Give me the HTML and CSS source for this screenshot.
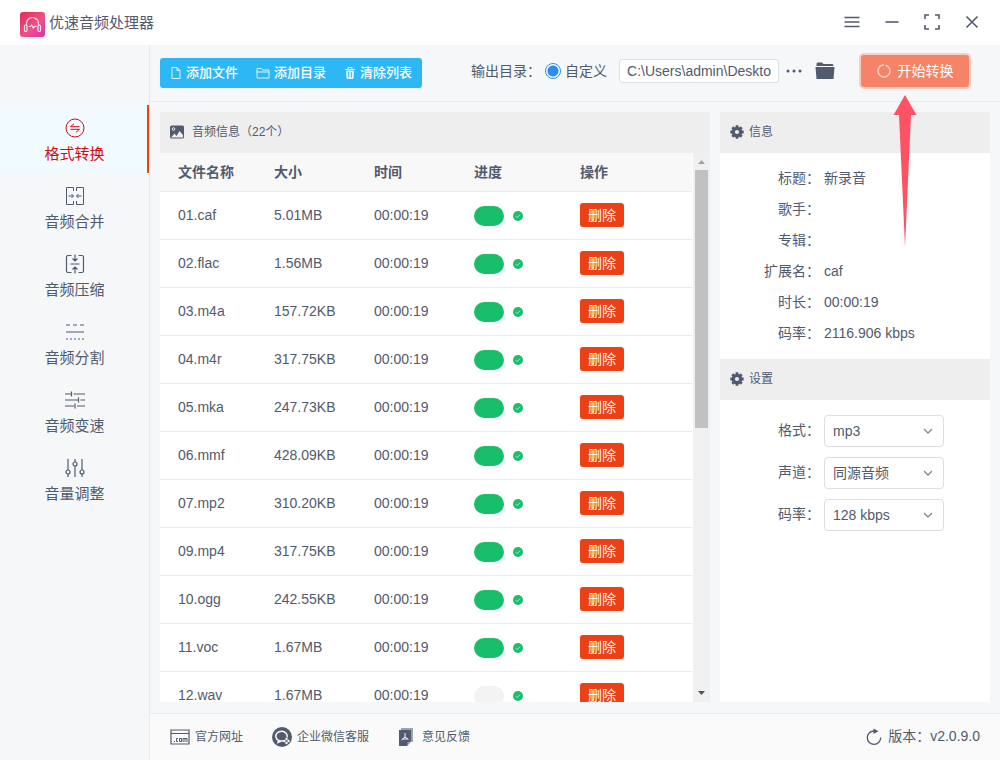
FILE: index.html
```html
<!DOCTYPE html>
<html lang="zh-CN">
<head>
<meta charset="utf-8">
<title>优速音频处理器</title>
<link rel="stylesheet" href="styles.css">
</head>
<body>
<svg class="symbols" aria-hidden="true">
  <symbol id="gear" viewBox="0 0 14 14"><g fill="none" stroke="currentColor"><circle cx="7" cy="7" r="3.700" stroke-width="3.200"/><path stroke-width="2.800" d="M7 .3V2.500M7 11.500V13.700M.3 7H2.500M11.500 7H13.700M2.300 2.300 4 4M10 10 11.700 11.700M11.700 2.300 10 4M4 10 2.300 11.700"/></g></symbol>
  <symbol id="ok" viewBox="0 0 10 10"><circle cx="5" cy="5" r="5" fill="#19be6b"/><path d="M2.600 5.600 4.200 6.400 7.400 3.600" fill="none" stroke="#a3e5c4"/></symbol>
  <symbol id="chevron" viewBox="0 0 10 6"><path d="M1 1 5 5 9 1" fill="none" stroke="#808695" stroke-width="1.300"/></symbol>
</svg>
<div class="app">
  <header class="titlebar">
    <svg class="logo" viewBox="0 0 25 25">
      <defs><linearGradient id="lg" x1="0" y1="0" x2="1" y2="1"><stop offset="0" stop-color="#e62b54"/><stop offset=".55" stop-color="#ee5084"/><stop offset="1" stop-color="#e32fb0"/></linearGradient></defs>
      <rect width="25" height="25" rx="3" fill="url(#lg)"/>
      <g fill="none" stroke="#ffe3ea" stroke-width="1.200" stroke-linecap="round" stroke-linejoin="round"><path d="M6.500 13V11.500a6 6 0 0 1 12 0V13"/><rect x="4.500" y="13" width="2.500" height="6.500" rx="1.200"/><rect x="18" y="13" width="2.500" height="6.500" rx="1.200"/><path d="M9 14.500h1.500l1.200-1.500 1.500 3 1.300-1.500H16"/></g>
    </svg>
    <h1 class="app-name">优速音频处理器</h1>
    <div class="window-controls">
      <button class="win-btn" aria-label="菜单"><svg viewBox="0 0 16 16"><path d="M.5 3.500H15.500M.5 8H15.500M.5 12.500H15.500"/></svg></button>
      <button class="win-btn" aria-label="最小化"><svg viewBox="0 0 16 16"><path d="M1.500 8H14.500"/></svg></button>
      <button class="win-btn" aria-label="最大化"><svg viewBox="0 0 16 16"><path d="M1 5V1H5M11 1H15V5M15 11V15H11M5 15H1V11"/></svg></button>
      <button class="win-btn" aria-label="关闭"><svg viewBox="0 0 16 16"><path d="M2.500 2.500 13.500 13.500M13.500 2.500 2.500 13.500"/></svg></button>
    </div>
  </header>
  <div class="body">
    <nav class="sidebar">
      <button class="nav-item active"><svg viewBox="0 0 20 20"><circle cx="10" cy="10" r="9"/><path d="M14.500 8.700H5.500L9 5.800M5.500 11.300H14.500L11 14.200"/></svg><span>格式转换</span></button>
      <button class="nav-item"><svg viewBox="0 0 20 20"><path d="M8.500 5V1.500H1.500V18.500H8.500V15M11.500 5V1.500H18.500V18.500H11.500V15M3.500 10H8.500M6.500 8 8.500 10 6.500 12M16.500 10H11.500M13.500 8 11.500 10 13.500 12"/></svg><span>音频合并</span></button>
      <button class="nav-item"><svg class="strong" viewBox="0 0 20 20"><path d="M6.500 1.500H3Q1.500 1.500 1.500 3V17Q1.500 18.500 3 18.500H6.500M13.500 1.500H17Q18.500 1.500 18.500 3V17Q18.500 18.500 17 18.500H13.500M5.500 10H14.500M10 .5V7M7.500 4.500 10 7 12.500 4.500M10 19.500V13M7.500 15.500 10 13 12.500 15.500"/></svg><span>音频压缩</span></button>
      <button class="nav-item"><svg class="strong" viewBox="0 0 20 20"><path d="M1 3H5M8 3H12M15 3H19M1 10H19"/><path stroke-dasharray="2 2" d="M1 17H19"/></svg><span>音频分割</span></button>
      <button class="nav-item"><svg class="strong" viewBox="0 0 20 20"><path d="M0 4H6.500M8.500 4H20M6.500 1.500V6.500M0 10H13.500M15.500 10H20M13.500 7.500V12.500M0 16H9M12 16H20M10 13.500V18.500"/></svg><span>音频变速</span></button>
      <button class="nav-item"><svg class="strong" viewBox="0 0 20 20"><path d="M3 1V12M3 16V19M10 1V4M10 8V19M17 1V12M17 16V19"/><circle cx="3" cy="14" r="2"/><circle cx="10" cy="6" r="2"/><circle cx="17" cy="14" r="2"/></svg><span>音量调整</span></button>
    </nav>
    <div class="workspace">
      <div class="toolbar">
        <div class="file-actions">
          <button class="file-btn"><svg viewBox="0 0 12 14"><path d="M2 1.500H7L10 4.500V12.500H2ZM7 1.500V4.500H10"/></svg>添加文件</button>
          <button class="file-btn"><svg class="wide" viewBox="0 0 14 14"><path d="M1 2.500H5.500L6.500 4H13V12H1ZM1 6H13"/></svg>添加目录</button>
          <button class="file-btn"><svg viewBox="0 0 12 14"><path d="M1 3.500H11M4 3V1.500H8V3"/><path fill="currentColor" d="M2.500 5H9.500L9 12.500H3Z"/><path stroke="#2db7f5" d="M4.700 6V11.500M7.300 6V11.500"/></svg>清除列表</button>
        </div>
        <div class="output">
          <span>输出目录：</span>
          <label class="custom"><input class="radio" type="radio" name="output" checked>自定义</label>
          <input class="path" type="text" aria-label="输出目录" value="C:\Users\admin\Deskto">
          <button class="icon-btn more" aria-label="更多"><svg viewBox="0 0 16 16"><g fill="currentColor"><circle cx="2" cy="8" r="1.500"/><circle cx="8" cy="8" r="1.500"/><circle cx="14" cy="8" r="1.500"/></g></svg></button>
          <button class="icon-btn folder" aria-label="打开目录"><svg viewBox="0 0 20 18"><path fill="currentColor" d="M1.500 4V1.500L2.500.5H7L8.500 2H17.500L18.500 3V4ZM.5 5H19.500L18.500 17H1.500Z"/></svg></button>
        </div>
        <div class="start-wrap">
          <button class="start"><svg viewBox="0 0 14 14"><circle cx="7" cy="7" r="6" fill="none" stroke="#fcd3ca" stroke-width="1.400" stroke-dasharray="35 3" transform="rotate(-75 7 7)"/></svg>开始转换</button>
          <svg class="pointer" viewBox="0 0 24 152" aria-hidden="true"><path fill="#ff5263" d="M12 0 23.500 20H18L12 152 6 20H.5Z"/></svg>
        </div>
      </div>
      <main class="panels">
        <section class="panel files">
          <h2 class="panel-head"><svg class="picture" viewBox="0 0 14 14"><rect y=".5" width="14" height="13" rx="1.500" fill="currentColor"/><circle cx="3.500" cy="4" r="1.300" fill="none" stroke="#eee"/><path fill="#eee" d="M1 12.500 4.500 8.500 6.500 11 9.500 6 13 10V12.500Z"/></svg>音频信息（22个）</h2>
          <div class="table-area">
            <div class="table-clip">
              <table class="table">
                <colgroup><col class="c-name"><col class="c-size"><col class="c-time"><col class="c-prog"><col></colgroup>
                <thead><tr><th>文件名称</th><th>大小</th><th>时间</th><th>进度</th><th>操作</th></tr></thead>
                <tbody>
                  <tr><td>01.caf</td><td>5.01MB</td><td>00:00:19</td><td><div class="progress"><i class="pill"></i><svg><use href="#ok"/></svg></div></td><td><button class="delete">删除</button></td></tr>
                  <tr><td>02.flac</td><td>1.56MB</td><td>00:00:19</td><td><div class="progress"><i class="pill"></i><svg><use href="#ok"/></svg></div></td><td><button class="delete">删除</button></td></tr>
                  <tr><td>03.m4a</td><td>157.72KB</td><td>00:00:19</td><td><div class="progress"><i class="pill"></i><svg><use href="#ok"/></svg></div></td><td><button class="delete">删除</button></td></tr>
                  <tr><td>04.m4r</td><td>317.75KB</td><td>00:00:19</td><td><div class="progress"><i class="pill"></i><svg><use href="#ok"/></svg></div></td><td><button class="delete">删除</button></td></tr>
                  <tr><td>05.mka</td><td>247.73KB</td><td>00:00:19</td><td><div class="progress"><i class="pill"></i><svg><use href="#ok"/></svg></div></td><td><button class="delete">删除</button></td></tr>
                  <tr><td>06.mmf</td><td>428.09KB</td><td>00:00:19</td><td><div class="progress"><i class="pill"></i><svg><use href="#ok"/></svg></div></td><td><button class="delete">删除</button></td></tr>
                  <tr><td>07.mp2</td><td>310.20KB</td><td>00:00:19</td><td><div class="progress"><i class="pill"></i><svg><use href="#ok"/></svg></div></td><td><button class="delete">删除</button></td></tr>
                  <tr><td>09.mp4</td><td>317.75KB</td><td>00:00:19</td><td><div class="progress"><i class="pill"></i><svg><use href="#ok"/></svg></div></td><td><button class="delete">删除</button></td></tr>
                  <tr><td>10.ogg</td><td>242.55KB</td><td>00:00:19</td><td><div class="progress"><i class="pill"></i><svg><use href="#ok"/></svg></div></td><td><button class="delete">删除</button></td></tr>
                  <tr><td>11.voc</td><td>1.67MB</td><td>00:00:19</td><td><div class="progress"><i class="pill"></i><svg><use href="#ok"/></svg></div></td><td><button class="delete">删除</button></td></tr>
                  <tr><td>12.wav</td><td>1.67MB</td><td>00:00:19</td><td><div class="progress"><i class="pill empty"></i><svg><use href="#ok"/></svg></div></td><td><button class="delete">删除</button></td></tr>
                </tbody>
              </table>
            </div>
            <div class="scrollbar" aria-hidden="true">
              <svg viewBox="0 0 17 17"><path fill="#a3a3a3" d="M5 11 8.500 7 12 11Z"/></svg>
              <div class="track"><div class="thumb"></div></div>
              <svg viewBox="0 0 17 17"><path fill="#505050" d="M5 6H12L8.500 10Z"/></svg>
            </div>
          </div>
        </section>
        <aside class="panel side">
          <h2 class="panel-head"><svg class="gear"><use href="#gear"/></svg>信息</h2>
          <dl class="info">
            <dt>标题：</dt><dd>新录音</dd>
            <dt>歌手：</dt><dd></dd>
            <dt>专辑：</dt><dd></dd>
            <dt>扩展名：</dt><dd>caf</dd>
            <dt>时长：</dt><dd>00:00:19</dd>
            <dt>码率：</dt><dd>2116.906 kbps</dd>
          </dl>
          <h2 class="panel-head"><svg class="gear"><use href="#gear"/></svg>设置</h2>
          <div class="settings">
            <label for="format">格式：</label><div class="select"><select id="format"><option>mp3</option></select><svg><use href="#chevron"/></svg></div>
            <label for="channel">声道：</label><div class="select"><select id="channel"><option>同源音频</option></select><svg><use href="#chevron"/></svg></div>
            <label for="bitrate">码率：</label><div class="select"><select id="bitrate"><option>128 kbps</option></select><svg><use href="#chevron"/></svg></div>
          </div>
        </aside>
      </main>
      <footer class="footer">
        <a class="site" href="#"><svg viewBox="0 0 20 16"><path fill="none" stroke="currentColor" stroke-width="1.200" d="M1 1H19V15H1ZM1 4.500H19"/><g fill="none" stroke="currentColor"><path d="M4 12.500H5M8 9.500H6.500V12.500H8M9.500 9.500H11.500V12.500H9.500ZM13 13V9.500H17V13M15 9.500V13"/></g></svg>官方网址</a>
        <a class="service" href="#"><svg viewBox="0 0 20 20"><circle cx="10" cy="10" r="10" fill="currentColor"/><path fill="none" stroke="#fafafa" stroke-width="1.500" d="M12 13.600A5.700 4.900 0 1 1 15 10.500M6.500 12.500 6 15.500 9 14"/><g fill="#fafafa"><circle cx="14.500" cy="12" r="1.200"/><circle cx="16.500" cy="14" r="1.200"/><circle cx="14.500" cy="16" r="1.200"/><circle cx="12.500" cy="14" r="1.200"/></g></svg>企业微信客服</a>
        <a class="feedback" href="#"><svg viewBox="0 0 16 18"><path fill="#9da2ae" d="M3 0H15V14H13V2H3Z"/><path fill="currentColor" d="M1 2H13V13L9 18H1Z"/><path fill="#9da2ae" d="M9.500 17.500V14H13Z"/><path fill="none" stroke="#fafafa" d="M7 5V9L3.500 12M7 9 10.500 11.500M4.500 11H9.500"/></svg>意见反馈</a>
        <div class="version"><svg viewBox="0 0 18 18"><path fill="none" stroke="currentColor" stroke-width="1.300" d="M9 3A6.700 6.700 0 1 0 15.700 9.500"/><path fill="currentColor" d="M8.500.5 13.500 3.200 8.500 6Z"/></svg><span>版本：v2.0.9.0</span></div>
      </footer>
    </div>
  </div>
</div>
</body>
</html>
```
FILE: styles.css
```css
* { box-sizing: border-box; }

body {
  margin: 0;
  background: #fff;
  color: #515a6e;
  font: 14px/20px "Liberation Sans", "Noto Sans CJK SC", sans-serif;
}

button, input, select {
  margin: 0;
  padding: 0;
  border: 0;
  background: none;
  color: inherit;
  font: inherit;
}

svg { display: block; flex: none; }
.symbols { display: none; }

.app {
  display: flex;
  flex-direction: column;
  height: 100vh;
}

/* Title bar */
.titlebar {
  display: flex;
  align-items: center;
  flex: none;
  height: 45px;
  padding: 0 8px 2px 20px;
  gap: 4px;
}
.logo { width: 25px; height: 25px; margin-top: 6px; }
.app-name { margin: 0; padding-top: 2px; font-size: 15px; font-weight: 400; }
.window-controls { display: flex; margin-left: auto; }
.win-btn { display: grid; place-items: center; width: 40px; height: 42px; }
.win-btn svg {
  width: 16px;
  height: 16px;
  fill: none;
  stroke: currentColor;
  stroke-width: 1.6;
}

/* Sidebar */
.body { display: flex; flex: 1; min-height: 0; background: #f5f7f9; }
.sidebar {
  flex: none;
  width: 150px;
  padding-top: 60px;
  border-right: 1px solid #e8eaec;
}
.nav-item {
  display: flex;
  flex-direction: column;
  align-items: center;
  justify-content: center;
  gap: 6px;
  width: 100%;
  height: 68px;
  padding-top: 4px;
  font-size: 15px;
}
.nav-item svg {
  width: 20px;
  height: 20px;
  fill: none;
  stroke: currentColor;
  stroke-width: 1;
}
.nav-item .strong { stroke-width: 1.2; }
.nav-item.active {
  background: linear-gradient(to left, #ed4014 2px, #f0faff 2px);
  color: #d40a0f;
}

/* Toolbar */
.workspace { display: flex; flex: 1; flex-direction: column; min-width: 0; }
.toolbar {
  display: flex;
  flex: none;
  align-items: center;
  height: 57px;
  padding: 0 29px 4px 10px;
  border-bottom: 1px solid #e8eaec;
}
.file-actions {
  display: flex;
  align-items: center;
  height: 30px;
  margin-top: 3px;
  padding: 0 10px;
  gap: 18px;
  border-radius: 3px;
  background: #2db7f5;
  color: #fff;
}
.file-btn { display: flex; align-items: center; gap: 4px; font-size: 13px; font-weight: 500; }
.file-btn svg { width: 12px; height: 14px; fill: none; stroke: currentColor; opacity: .85; }
.file-btn .wide { width: 14px; }
.output { display: flex; align-items: center; margin-left: 49px; }
.custom { display: flex; align-items: center; gap: 4px; margin-left: 4px; }
.radio {
  appearance: none;
  width: 16px;
  height: 16px;
  border: 1px solid #2d8cf0;
  border-radius: 50%;
  background: radial-gradient(circle, #2d8cf0 5px, #fff 6px);
}
.path {
  width: 160px;
  height: 24px;
  margin-left: 12px;
  padding: 0 7px;
  border: 1px solid #dcdee2;
  border-radius: 3px;
  background: #fff;
}
.more { margin-left: 7px; }
.more svg { width: 16px; height: 16px; }
.folder { margin-left: 13px; }
.folder svg { width: 20px; height: 18px; }
.start-wrap { position: relative; margin-left: auto; }
.start {
  display: flex;
  align-items: center;
  justify-content: center;
  gap: 7px;
  width: 112px;
  height: 36px;
  border: 2px solid #f9cdc4;
  border-radius: 5px;
  background: #f58368;
  color: #fff;
}
.start svg { width: 14px; height: 14px; }
.pointer { position: absolute; z-index: 2; top: 42px; left: 34px; width: 24px; height: 152px; }

/* Panels */
.panels { display: flex; flex: 1; min-height: 0; gap: 10px; padding: 10px 10px 11px; }
.panel { background: #fff; overflow: hidden; }
.files { display: flex; flex: 1; flex-direction: column; min-width: 0; }
.side { flex: none; width: 270px; }
.panel-head {
  display: flex;
  flex: none;
  align-items: center;
  height: 41px;
  margin: 0;
  padding: 0 10px 2px;
  background: #eee;
  font-size: 12px;
  font-weight: 400;
}
.picture { width: 14px; height: 14px; margin-right: 8px; }
.gear { width: 14px; height: 14px; margin-right: 5px; }

.table-area { display: flex; flex: 1; min-height: 0; }
.table-clip { flex: 1; overflow: hidden; padding-right: 1px; }
.table { width: 100%; border-collapse: separate; border-spacing: 0; table-layout: fixed; }
.c-name { width: 96px; }
.c-size, .c-time { width: 100px; }
.c-prog { width: 106px; }
.table th, .table td {
  height: 48px;
  padding: 0 0 2px 18px;
  border-bottom: 1px solid #e8eaec;
  text-align: left;
}
.table th { height: 39px; padding-bottom: 0; background: #f8f8f9; font-weight: 700; }
.progress { display: flex; align-items: center; gap: 9px; padding-top: 2px; }
.progress svg { width: 10px; height: 10px; }
.pill { width: 30px; height: 20px; border-radius: 10px; background: #19be6b; }
.pill.empty { background: #f3f3f3; }
.delete {
  display: block;
  height: 24px;
  padding: 0 8px;
  border-radius: 3px;
  background: #ed4014;
  color: #fff;
}
.scrollbar { display: flex; flex-direction: column; width: 17px; background: #f0f0f0; }
.scrollbar svg { width: 17px; height: 17px; }
.track { flex: 1; padding: 0 2px; }
.thumb { height: 50%; background: #c1c1c1; }

.info {
  display: grid;
  grid-template-columns: 90px 1fr;
  grid-auto-rows: 31px;
  align-items: center;
  column-gap: 4px;
  margin: 0;
  padding: 9px 10px 11px;
}
.info dt { text-align: right; }
.info dd { margin: 0; }
.settings {
  display: grid;
  grid-template-columns: 90px 120px;
  align-items: center;
  gap: 10px 4px;
  padding: 15px 10px;
}
.settings label { padding-bottom: 2px; text-align: right; }
.select { position: relative; }
.select select {
  appearance: none;
  display: block;
  width: 100%;
  height: 32px;
  padding: 0 24px 0 8px;
  border: 1px solid #dcdee2;
  border-radius: 4px;
  background: #fff;
}
.select svg {
  position: absolute;
  top: 13px;
  right: 11px;
  width: 10px;
  height: 6px;
  pointer-events: none;
}

/* Footer */
.footer {
  display: flex;
  flex: none;
  align-items: center;
  height: 47px;
  padding: 0 20px;
  gap: 29px;
  border-top: 1px solid #e8eaec;
  background: #fafafa;
}
.footer a {
  display: flex;
  align-items: center;
  gap: 5px;
  color: inherit;
  font-size: 12px;
  text-decoration: none;
}
.site svg { width: 20px; height: 16px; }
.service svg { width: 20px; height: 20px; }
.feedback svg { width: 16px; height: 18px; }
.footer .feedback { gap: 8px; }
.version { display: flex; align-items: center; gap: 5px; margin-left: auto; }
.version span { padding-bottom: 2px; }
.version svg { width: 18px; height: 18px; }
```
